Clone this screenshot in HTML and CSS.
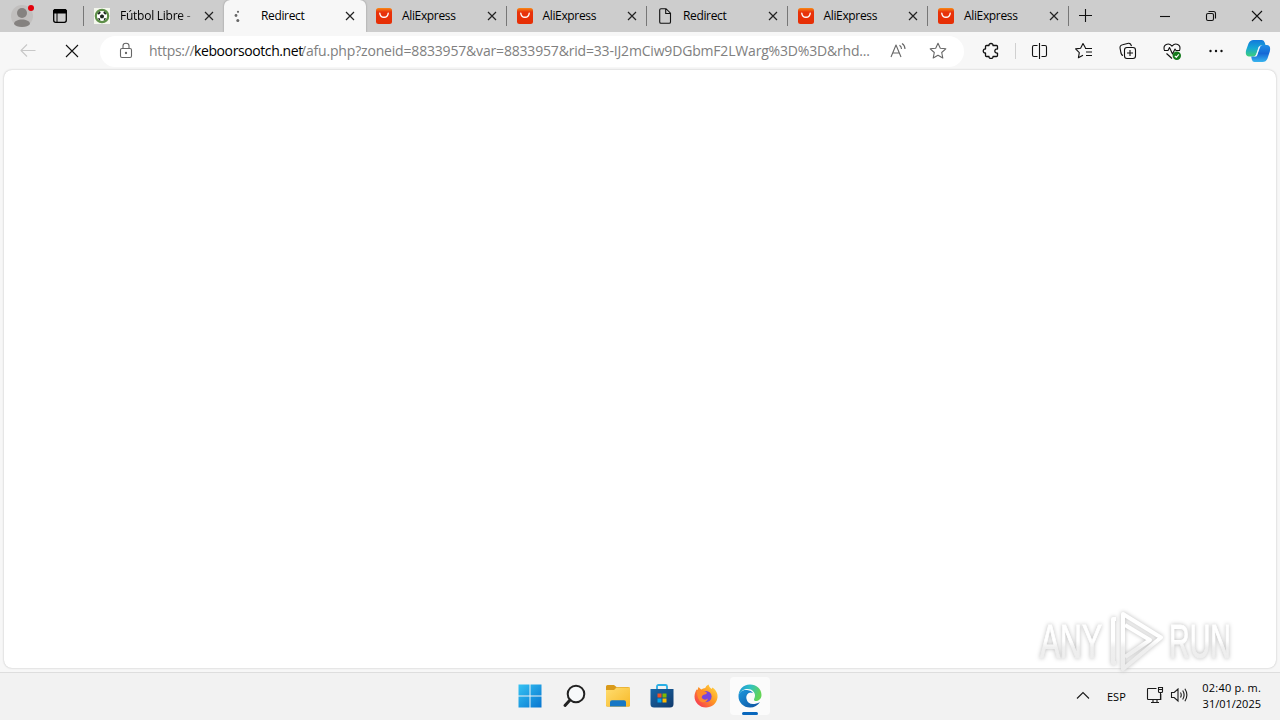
FILE: index.html
```html
<!DOCTYPE html>
<html lang="es">
<head>
<meta charset="utf-8">
<title>Redirect</title>
<link rel="stylesheet" href="styles.css">
</head>
<body>
<svg class="defs" width="0" height="0">
  <defs>
    <linearGradient id="ali" x1="0" y1="0" x2="0" y2="1"><stop offset="0" stop-color="#f98a14"/><stop offset=".25" stop-color="#e8320c"/><stop offset="1" stop-color="#e62e04"/></linearGradient>
    <linearGradient id="win" x1="0" y1="0" x2="1" y2="1"><stop offset="0" stop-color="#35c3f3"/><stop offset="1" stop-color="#0875d0"/></linearGradient>
    <linearGradient id="fold" x1="0" y1="0" x2="1" y2="1"><stop offset="0" stop-color="#ffdd70"/><stop offset="1" stop-color="#f7b928"/></linearGradient>
    <linearGradient id="store" x1="0" y1="0" x2="1" y2="1"><stop offset="0" stop-color="#1767a8"/><stop offset="1" stop-color="#123a6b"/></linearGradient>
    <linearGradient id="fox" x1="1" y1="0" x2="0" y2="1"><stop offset="0" stop-color="#ffe14a"/><stop offset=".45" stop-color="#ff9a22"/><stop offset="1" stop-color="#f5215f"/></linearGradient>
    <linearGradient id="edgeTop" x1="0" y1="0" x2="1" y2=".3"><stop offset="0" stop-color="#1c8fd8"/><stop offset=".5" stop-color="#2fc0c4"/><stop offset="1" stop-color="#63d457"/></linearGradient>
    <linearGradient id="edgeLow" x1="0" y1="0" x2="1" y2="1"><stop offset="0" stop-color="#1b98de"/><stop offset="1" stop-color="#0d4f9e"/></linearGradient>
    <linearGradient id="copA" x1="0" y1="0" x2="0" y2="1"><stop offset="0" stop-color="#1279dc"/><stop offset=".5" stop-color="#16a7d4"/><stop offset="1" stop-color="#3fd079"/></linearGradient>
    <linearGradient id="copB" x1="0" y1="0" x2="0" y2="1"><stop offset="0" stop-color="#1d8ee6"/><stop offset=".5" stop-color="#1668d6"/><stop offset="1" stop-color="#38b4ee"/></linearGradient>
    <linearGradient id="mark" x1="0" y1="10" x2="0" y2="66" gradientUnits="userSpaceOnUse"><stop offset="0" stop-color="#fff"/><stop offset=".5" stop-color="#fff"/><stop offset=".62" stop-color="#efefef"/><stop offset="1" stop-color="#ececec"/></linearGradient>
    <symbol id="x" viewBox="0 0 10 10"><path d="M1 1l8 8M9 1L1 9"/></symbol>
    <symbol id="bag" viewBox="0 0 16 16"><rect width="16" height="16" rx="2.5" fill="url(#ali)"/><path d="M3.800 5.200c.5 5.400 7.900 5.400 8.400 0" fill="none" stroke="#fff" stroke-width="1.400" stroke-linecap="round"/></symbol>
  </defs>
</svg>

<header class="tabstrip">
  <div class="left-tools">
    <svg class="avatar" width="28" height="28" viewBox="0 0 28 28"><circle cx="14" cy="15" r="11" fill="#c1bfbe"/><circle cx="14" cy="12" r="5" fill="#858280"/><path d="M6 23c0-6 16-6 16 0-2 4-14 4-16 0z" fill="#858280"/><circle cx="23" cy="7" r="3" fill="#e3000b"/></svg>
    <svg class="actions" width="16" height="16" viewBox="0 0 16 16"><rect x="1.700" y="1.700" width="12.600" height="12.600" rx="2" fill="none" stroke="#000" stroke-width="1.300"/><path d="M1.500 5V3q0-1.500 1.500-1.500h10q1.500 0 1.500 1.500v2zM5 5v9" stroke="#000" stroke-width="1"/></svg>
  </div>
  <div class="tab first">
    <svg class="fav" viewBox="0 0 16 16"><rect width="16" height="16" fill="#f4f7ed"/><circle cx="8" cy="8" r="6.200" fill="#fff" stroke="#5d8f48" stroke-width="2.200"/><path d="M8 6.300l2.200 1.400-.8 2.600H6.600l-.8-2.600zM3.500 5.500L5.600 3.200l1.200 1.500-2 2zM12.500 5.500l-2.100-2.300-1.200 1.500 2 2zM4 10l1.800.2.500 2.400-1.300-.6zM12 10l-1.800.2-.5 2.400 1.300-.6z" fill="#1c2620"/></svg>
    <span class="title futbol">Fútbol Libre - </span><svg class="close"><use href="#x"/></svg>
  </div>
  <div class="tab active">
    <svg class="fav" viewBox="0 0 16 16"><g fill="#666"><circle cx="5" cy="3.800" r="1.100"/><circle cx="3" cy="7.500" r="1.400"/><circle cx="4.800" cy="12.500" r="1.500"/></g></svg>
    <span class="title">Redirect</span><svg class="close"><use href="#x"/></svg>
  </div>
  <div class="tab"><svg class="fav"><use href="#bag"/></svg><span class="title">AliExpress</span><svg class="close"><use href="#x"/></svg></div>
  <div class="tab"><svg class="fav"><use href="#bag"/></svg><span class="title">AliExpress</span><svg class="close"><use href="#x"/></svg></div>
  <div class="tab"><svg class="fav" viewBox="0 0 16 16"><path d="M2.700 2q0-1.300 1.300-1.300h5l4.500 4.500V14q0 1.300-1.300 1.300H4q-1.300 0-1.300-1.300zM8.700 1v4.500h4.500" fill="none" stroke="#111" stroke-width="1.100"/></svg><span class="title">Redirect</span><svg class="close"><use href="#x"/></svg></div>
  <div class="tab"><svg class="fav"><use href="#bag"/></svg><span class="title">AliExpress</span><svg class="close"><use href="#x"/></svg></div>
  <div class="tab"><svg class="fav"><use href="#bag"/></svg><span class="title">AliExpress</span><svg class="close"><use href="#x"/></svg></div>
  <svg class="plus" width="16" height="16" viewBox="0 0 16 16"><path d="M7.500 1v13M1 7.500h13" stroke="#111" stroke-width="1.100"/></svg>
  <div class="window-buttons">
    <svg viewBox="0 0 12 12"><path d="M1 6.500h10"/></svg>
    <svg viewBox="0 0 12 12"><rect x="1.500" y="3.500" width="7" height="7" rx="1.500"/><path d="M3.500 1.500h5q2 0 2 2v5"/></svg>
    <svg viewBox="0 0 12 12"><path d="M1 1l10 10M11 1L1 11"/></svg>
  </div>
</header>

<nav class="toolbar">
  <svg class="ico back" viewBox="0 0 20 20"><path d="M17.500 9.500H3M9 3.500l-6 6 6 6"/></svg>
  <svg class="ico stop" viewBox="0 0 20 20"><path d="M4 4l12 12M16 4L4 16"/></svg>
  <div class="address">
    <svg class="ico grey lock" viewBox="0 0 20 20"><rect x="4.500" y="7.500" width="11" height="9" rx="1.500"/><path d="M7 7V4.800C7 1.300 13 1.300 13 4.800V7"/><circle cx="10" cy="12" r=".6" fill="#555"/></svg>
    <div class="url"><span class="scheme">https://</span><span class="host">keboorsootch.net</span><span class="path">/afu.php?zoneid=8833957&amp;var=8833957&amp;rid=33-IJ2mCiw9DGbmF2LWarg%3D%3D&amp;rhd...</span></div>
    <svg class="ico grey read" viewBox="0 0 20 20"><path d="M3 16L8 4l5 12M5 12h6.200M11.500 4.200q2 1.300 2 3.800M14 2.500q3 1.800 3 5.500"/></svg>
    <svg class="ico grey star" viewBox="0 0 20 20"><path d="M10 2.200l2.300 5 5.500.6-4.100 3.700 1.100 5.500-4.800-2.700L5.200 17l1.100-5.500-4.100-3.700 5.500-.6z"/></svg>
  </div>
  <div class="tools">
    <svg class="ico heavy" viewBox="0 0 20 20"><path d="M5.500 4.500H8C7.500 1.800 12.500 1.800 12 4.500h3.500q1 0 1 1V8c-3.600-.5-3.600 4.600 0 4.100v2.400q0 1-1 1H12c.5 2.500-4.500 2.500-4 0H5.500q-1 0-1-1V12C1.500 12.500 1.500 7.500 4.500 8V5.500q0-1 1-1z"/></svg>
    <i class="rule"></i>
    <svg class="ico" viewBox="0 0 20 20"><path d="M7.500 4.500H4q-1.500 0-1.500 1.500v8q0 1.500 1.500 1.500h3.500M11.500 4.500H15q1.500 0 1.500 1.500v8q0 1.500-1.500 1.500h-3.500M9.500 2v16"/></svg>
    <svg class="ico" viewBox="0 0 20 20"><path d="M11.500 7L9 2.500 6.600 7.200l-5 .7 3.700 3.700-.9 5.200L9 14.300M11 7.500h7M12 11h6M12 14.500h6"/></svg>
    <svg class="ico" viewBox="0 0 20 20"><path d="M5 14.500C2.500 13.800 3 11 2.300 8.500S2 4.200 4.500 3.700l6-1.500q2.300-.2 3 3"/><rect x="6.500" y="6.500" width="11" height="11" rx="2.500"/><path d="M12 9v6M9 12h6"/></svg>
    <svg class="ico" viewBox="0 0 20 20"><path d="M2.300 9C.8 3.500 6.500 1 10 5.200 13.500 1 19.200 3.500 17.700 9M2 9.500h4l1.500-3 3 6.500 2.500-5 1 1.500h4M4.500 12.500L10 17.500"/><circle cx="14.800" cy="14.800" r="4.200" fill="#13791b" stroke="none"/><path d="M12.800 14.800l1.500 1.500 2.500-3" stroke="#fff"/></svg>
    <svg class="ico" viewBox="0 0 20 20"><g fill="#111" stroke="none"><circle cx="4.500" cy="10" r="1.200"/><circle cx="10" cy="10" r="1.200"/><circle cx="15.500" cy="10" r="1.200"/></g></svg>
  </div>
  <svg class="copilot" width="26" height="26" viewBox="0 0 26 26"><path d="M8.500 2H17q2 0 2.700 2.500L20.500 7H17q-2.500 0-3.300 2.500L11.500 16q-.8 2.500-3 2.500H4c-3.500 0-3.500-4-2.800-6.500L3.500 5.500Q5 2 8.500 2z" fill="url(#copA)"/><path d="M17.500 24H9.500q-2 0-2.700-2.500L6.200 18.500H9q2.500 0 3.300-2.500l2.200-6.500Q15.300 7 17.500 7H22c3.500 0 3.500 4 2.800 6.500l-2.300 7Q21 24 17.500 24z" fill="url(#copB)"/><path d="M12.500 8.500h3.200q-.7.500-1.100 1.700l-2.100 6.300q-.5 1.500-1.300 2H8.500q2 0 2.700-2.200l2-6q.3-1 .8-1.800z" fill="#eef8ff"/></svg>
</nav>

<main class="viewport"><div class="page"></div></main>

<div class="watermark">
  <svg width="220" height="76" viewBox="0 0 220 76">
    <g fill="url(#mark)" stroke="url(#mark)">
      <text x="10" y="54.500" textLength="62" lengthAdjust="spacingAndGlyphs">ANY</text>
      <text x="139" y="54.500" textLength="62" lengthAdjust="spacingAndGlyphs">RUN</text>
    </g>
    <g class="play" stroke="url(#mark)"><path d="M93 66V11l38 23.500z"/><path d="M86 16h-3v44h3M95 22l25 15-25 17"/></g>
  </svg>
</div>

<footer class="taskbar">
  <div class="apps">
    <div class="app"><svg viewBox="0 0 24 24"><path d="M.5.500h11v11H.5zM12.500.500h11v11h-11zM.5 12.500h11v11H.5zM12.500 12.500h11v11h-11z" fill="url(#win)"/></svg></div>
    <div class="app"><svg viewBox="0 0 24 24"><circle cx="14" cy="10" r="8.300" fill="#f7f9fa" stroke="#222" stroke-width="2"/><path d="M8 16l-5 5.500" stroke="#222" stroke-width="3" stroke-linecap="round"/></svg></div>
    <div class="app"><svg viewBox="0 0 24 24"><path d="M0 2.500Q0 1 1.500 1H8l2.500 2H22q2 0 2 2v16q0 1.500-1.500 1.500h-21Q0 22.500 0 21z" fill="#d99a1a"/><path d="M0 6h8l2.500-2.500H24V21q0 1.500-1.500 1.500h-21Q0 22.500 0 21z" fill="url(#fold)"/><path d="M4 22.500v-4.300q0-2 2-2h12q2 0 2 2v4.300z" fill="#1677c5"/></svg></div>
    <div class="app"><svg viewBox="0 0 24 24"><path d="M7 6V2.500Q7 1 8.500 1h7Q17 1 17 2.500V6" fill="none" stroke="#2aafe5" stroke-width="1.800"/><path d="M.5 5h23v15q0 3.500-3.500 3.500H4Q.5 23.500.5 20z" fill="url(#store)"/><path d="M7.500 9.500h4v4h-4z" fill="#f25022"/><path d="M12.500 9.500h4v4h-4z" fill="#7fba00"/><path d="M7.500 14.500h4v4h-4z" fill="#00a4ef"/><path d="M12.500 14.500h4v4h-4z" fill="#ffb900"/></svg></div>
    <div class="app"><svg viewBox="0 0 24 24"><path d="M4.500 3l2.700 2.500q2-1.500 4-1.500Q12 1.500 14.500.500q.5 2.800 3 4.500l1-1.500C22 6 24 9.500 23.500 13.500 22.700 20 17.500 23.500 12 23.500 5.500 23.500.5 18.500.5 12.500.500 9 2 7 2.500 5.500l1 .5z" fill="url(#fox)"/><circle cx="12" cy="12.500" r="5.600" fill="#7945dc"/><path d="M3 7q3-2 5.500-.5l4 1.500q1 2-2 2.500-3 .5-2.700 3.500 3 3 6.200.5-2 5-6.500 3.500Q3 16 3 7z" fill="#ff8a2c"/></svg></div>
    <div class="app current"><svg viewBox="0 0 24 24"><path d="M12 .5C5 .500.500 5.500.500 12.500c1-5 5-7.500 9-7.500 5 0 7.500 3.500 7.500 6.500 0 2-1 3-1 4 0 3 7.500 1.500 7.500-4.500C23.500 5 18.500.5 12 .5z" fill="url(#edgeTop)"/><path d="M.5 12.500C1 8 4.500 5.500 9 6c3 .300 5 1.500 6 3-4-2-7.500 1.500-6.500 6 1.200 5.500 7 6.500 13.500 3-2 3.500-5.800 5.500-10 5.500C5.500 23.500.500 18.500.500 12.500z" fill="url(#edgeLow)"/></svg></div>
  </div>
  <div class="tray">
    <svg class="chev" width="14" height="10" viewBox="0 0 14 10"><path d="M1 7.500l6-6 6 6"/></svg>
    <span class="lang">ESP</span>
    <svg class="net" width="18" height="18" viewBox="0 0 18 18"><path d="M10.500 1.500H2.200q-.7 0-.7.700v9.600q0 .7.700.7h12.600V7M5 15.500h8M7 12.500v3M11 12.500v3M12.500.500h4v4q0 1-1 1h-2q-1 0-1-1zM12.500 2.500h4M14.500 5.500V12"/></svg>
    <svg class="vol" width="18" height="16" viewBox="0 0 18 16"><path d="M1.500 4.500h2.700L8 1v12L4.200 9.500H1.500zM10.500 4.500q1.500 2.500 0 5M12.700 2.500q2.800 4.500 0 9M14.900.800q4 6.200 0 12.400"/></svg>
    <div class="clock"><span class="time">02:40 p. m.</span><span class="date">31/01/2025</span></div>
  </div>
</footer>
</body>
</html>
```
FILE: styles.css
```css
* { box-sizing: border-box; }
body {
  margin: 0;
  width: 1280px;
  height: 720px;
  overflow: hidden;
  display: flex;
  flex-direction: column;
  background: #f7f7f7;
  color: #000;
  font-family: "Open Sans", "Noto Sans", sans-serif;
  font-size: 12px;
}
svg { flex: none; display: block; }
.defs { position: absolute; }

.tabstrip { height: 32px; flex: none; display: flex; background: #cdcdcd; }
.left-tools { width: 83px; display: flex; align-items: center; padding-left: 8px; gap: 16px; }
.avatar { margin-top: -2px; }
.tab {
  position: relative;
  width: 140.500px;
  display: flex;
  align-items: center;
  padding: 0 10px;
}
.tab.first { width: 141px; padding-left: 11px; }
.tab:not(.active):not(.first)::after, .tab.first::before {
  content: "";
  position: absolute;
  right: 0;
  top: 6px;
  width: 1px;
  height: 20px;
  background: #777;
}
.tab.first::before { right: auto; left: 0; }
.tab.active { width: 142px; background: #f7f7f7; border-radius: 6px 6px 0 0; padding: 0 11px 0 9px; box-shadow: 0 0 2px #888; clip-path: inset(0 -3px 0 -3px); }
.fav { width: 16px; height: 16px; }
.title { margin-left: 10px; flex: 1; line-height: 16px; white-space: nowrap; font-size: 12px; letter-spacing: -0.350px; }
.active .title { margin-left: 12px; }
.futbol { letter-spacing: -0.250px; -webkit-mask-image: linear-gradient(90deg, #000 70%, transparent); }
.close { width: 10px; height: 10px; fill: none; stroke: #222; stroke-width: 1.200; }
.plus { margin: 8px 0 0 9px; }
.window-buttons { margin-left: auto; margin-right: 17px; display: flex; align-items: center; gap: 34px; }
.window-buttons svg { width: 12px; height: 12px; fill: none; stroke: #111; stroke-width: 1.100; }

.toolbar { height: 38px; flex: none; display: flex; align-items: center; padding-left: 18px; background: #f7f7f7; }
.ico { width: 20px; height: 20px; fill: none; stroke: #111; stroke-width: 1.100; stroke-linejoin: round; }
.back { stroke: #c8c8c8; }
.stop { margin-left: 24px; }
.grey { stroke: #666; }
.heavy { stroke-width: 1.300; }
.address { margin-left: 18px; width: 864px; height: 31px; border-radius: 16px; background: #fff; display: flex; align-items: center; padding: 0 16px; }
.url { margin-left: 13px; width: 739px; display: flex; white-space: nowrap; font-size: 14px; line-height: 20px; color: #808080; }
.scheme { width: 45px; letter-spacing: -0.300px; }
.host { width: 107px; color: #000; letter-spacing: -0.400px; }
.path { letter-spacing: -0.180px; }
.star { margin-left: 20px; }
.tools { display: flex; align-items: center; margin-left: 17px; gap: 24px; }
.rule { width: 1px; height: 16px; background: #d0d0d0; margin: 0 -10px 0 -10px; }
.copilot { margin-left: 19px; }

.viewport { height: 602px; flex: none; padding: 0 4px 4px; }
.page { height: 598px; background: #fff; border-radius: 8px; box-shadow: 0 0 2px #b5b5b5; }

.watermark { position: absolute; left: 1030px; top: 603px; filter: drop-shadow(0 0 2px #bbb); }
.watermark text { font: 49px "Liberation Sans", sans-serif; stroke-width: 1px; }
.play { fill: none; stroke-width: 4; stroke-linejoin: round; }

.taskbar { height: 48px; flex: none; border-top: 1px solid #dedede; background: #f2f2f2; display: flex; align-items: center; }
.apps { margin: -1px 0 0 510px; display: flex; gap: 4px; }
.app { position: relative; width: 40px; height: 38px; display: flex; align-items: center; justify-content: center; border-radius: 4px; }
.app svg { width: 24px; height: 24px; }
.current { background: #fbfbfb; }
.current::after { content: ""; position: absolute; bottom: 0; left: 12px; width: 16px; height: 3px; border-radius: 2px; background: #0867bd; }
.tray { margin: -1px 0 0 auto; padding-right: 19px; display: flex; align-items: center; }
.tray svg { fill: none; stroke: #1b1b1b; stroke-width: 1.100; }
.lang { margin-left: 17px; width: 20px; font-size: 11px; }
.net { margin-left: 19px; }
.vol { margin-left: 6px; }
.clock { margin-left: 14px; width: 59px; display: flex; flex-direction: column; align-items: flex-end; font-size: 11px; line-height: 16px; white-space: nowrap; }
.time { letter-spacing: 0.200px; }
```
